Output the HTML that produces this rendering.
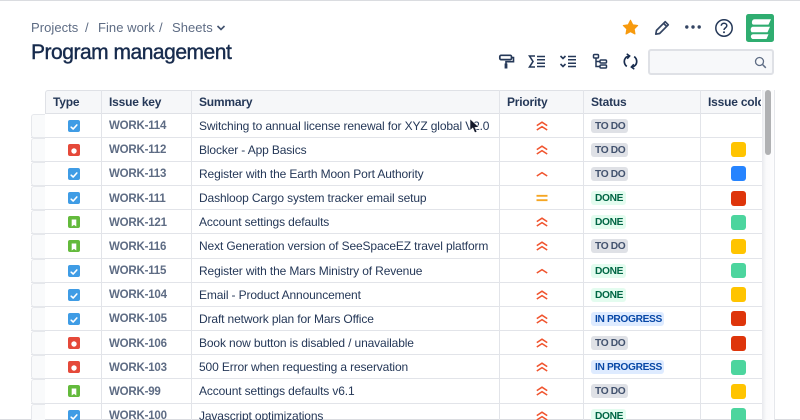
<!DOCTYPE html>
<html><head><meta charset="utf-8"><style>
html,body{margin:0;padding:0}
body{width:800px;height:420px;overflow:hidden;background:#fff;position:relative;font-family:"Liberation Sans",sans-serif;color:#172B4D}
#p{position:absolute;left:0;top:0;width:800px;height:420px;overflow:hidden}
.a{position:absolute;white-space:nowrap}
.crumb{top:20px;font-size:13px;line-height:16px;color:#5E6C84;letter-spacing:.05px}
h1{position:absolute;left:31px;top:39px;margin:0;font-size:21px;line-height:28px;font-weight:400;color:#172B4D;letter-spacing:-.48px;-webkit-text-stroke:.4px #172B4D;white-space:nowrap}
.hd{position:absolute;left:45px;top:90px;width:716px;height:24px;background:#F6F7F9;border:1px solid #DFE1E6;border-right:0;border-radius:3px 0 0 0;box-sizing:border-box}
.v{position:absolute;top:90px;width:1px;height:330px;background:#E2E4E9}
.th{position:absolute;top:95px;font-size:12px;line-height:14px;font-weight:700;color:#253858;letter-spacing:-.2px;white-space:nowrap}
.r{position:absolute;left:0;width:762px;height:24.17px}
.r .l{position:absolute;left:31px;right:0;bottom:0;height:1px;background:#E2E4E9}
.r .s{position:absolute;left:31px;top:0;width:14px;bottom:0;background:#F9FAFB;border:1px solid #E6E8EC;border-right:0;border-radius:3px 0 0 3px;box-sizing:border-box}
.i{position:absolute;left:67.5px;top:6px;width:12px;height:12px;border-radius:2px}
.task{background:#3F9CE5}.bug{background:#E5493A}.story{background:#63BA3C}
.k{position:absolute;left:109px;top:5.500px;font-size:11.500px;line-height:14px;font-weight:700;color:#5E6C84;letter-spacing:-.2px}
.t{position:absolute;left:199px;top:5px;font-size:12px;line-height:14px;color:#253858;letter-spacing:-.13px;white-space:nowrap}
.pr{position:absolute;left:536px;top:6px;width:12px;height:12px}
.z{position:absolute;left:591px;top:5px;height:14px;line-height:15px;font-size:10.200px;font-weight:700;padding:0 4px;border-radius:3px;letter-spacing:-.35px;white-space:nowrap}
.td{background:#DFE1E6;color:#42526E;width:29px;text-align:center}
.dn{background:#E3FCEF;color:#006644;width:27px;text-align:center}
.ip{background:#DEEBFF;color:#0747A6;width:65px;text-align:center}
.c{position:absolute;left:731px;top:4.500px;width:15px;height:15px;border-radius:3px}
</style></head><body><div id="p">
<svg width="0" height="0" style="position:absolute"><defs>
<symbol id="ck" viewBox="0 0 12 12"><path d="M3.200 6.200 5.200 8 8.800 4" fill="none" stroke="#fff" stroke-width="1.600" stroke-linecap="round" stroke-linejoin="round"/></symbol>
<symbol id="dot" viewBox="0 0 12 12"><circle cx="6" cy="6" r="2.700" fill="#fff"/></symbol>
<symbol id="bm" viewBox="0 0 12 12"><path d="M3.700 2.500h4.600v7L6 7.900 3.700 9.500z" fill="#fff"/></symbol>
<symbol id="hh" viewBox="0 0 12 12"><path d="M.8 5.600 6 2.200l5.200 3.400M.8 10 6 6.600l5.200 3.400" fill="none" stroke="#F0532D" stroke-width="1.500"/></symbol>
<symbol id="h1" viewBox="0 0 12 12"><path d="M.8 8 6 4.600 11.200 8" fill="none" stroke="#F0532D" stroke-width="1.500"/></symbol>
<symbol id="me" viewBox="0 0 12 12"><path d="M.5 3.800h11M.5 8.200h11" fill="none" stroke="#F5A623" stroke-width="1.900"/></symbol>
</defs></svg>

<div class="a" style="left:0;top:0;width:800px;height:1px;background:#DADCE0"></div>
<div class="a" style="left:0;top:419px;width:800px;height:1px;background:#DADCE0"></div>

<div class="a crumb" style="left:31px">Projects</div>
<div class="a crumb" style="left:85px">/</div>
<div class="a crumb" style="left:98px">Fine work</div>
<div class="a crumb" style="left:159px">/</div>
<div class="a crumb" style="left:172px">Sheets</div>
<svg class="a" style="left:216px;top:24px" width="10" height="8" viewBox="0 0 10 8"><path d="M1.500 2 5 5.500 8.500 2" fill="none" stroke="#42526E" stroke-width="1.600"/></svg>
<h1>Program management</h1>

<!-- top icons -->
<svg class="a" style="left:622px;top:19px" width="17" height="17" viewBox="0 0 17 17"><path d="M8.500 1.200 10.800 5.700l4.900.8-3.500 3.500.8 5-4.500-2.300L4 15l.8-5L1.300 6.500l4.900-.8z" fill="#F79A0E" stroke="#F79A0E" stroke-linejoin="round"/></svg>
<svg class="a" style="left:654px;top:20px" width="16" height="16" viewBox="0 0 16 16"><path d="M11.200 1.700 14.300 4.800 5.600 13.500 1.800 14.200 2.500 10.400zM9.600 3.400 12.600 6.400" fill="none" stroke="#344563" stroke-width="1.700" stroke-linejoin="round"/></svg>
<svg class="a" style="left:684px;top:24px" width="18" height="6" viewBox="0 0 18 6"><circle cx="2.800" cy="3" r="1.700" fill="#344563"/><circle cx="9" cy="3" r="1.700" fill="#344563"/><circle cx="15.200" cy="3" r="1.700" fill="#344563"/></svg>
<svg class="a" style="left:714px;top:18px" width="20" height="20" viewBox="0 0 20 20"><circle cx="10" cy="10" r="8.200" fill="none" stroke="#253858" stroke-width="1.500"/><path d="M7.300 7.800C7.300 6.200 8.500 5.300 10 5.300c1.600 0 2.800 1 2.800 2.400 0 2.200-2.800 2.200-2.800 4.300" fill="none" stroke="#253858" stroke-width="1.500"/><circle cx="10" cy="14.300" r="1" fill="#253858"/></svg>
<svg class="a" style="left:746px;top:14px" width="28" height="28" viewBox="0 0 28 28"><rect width="28" height="28" rx="2.500" fill="#2FAD70"/><path d="M8.500 5.300H25L22.500 10.600H7.500C5 10.600 5.500 5.300 8.500 5.300zM7 12.800H24L21.500 18.200H5.500C3.800 15.500 5 12.800 7 12.800zM7 20.200H22.500L20.500 25H6.500C4 24 4.500 20.200 7 20.200z" fill="#fff"/></svg>

<!-- toolbar icons -->
<svg class="a" style="left:498px;top:53px" width="17" height="17" viewBox="0 0 17 17"><rect x="1.800" y="2.300" width="11.700" height="4.300" rx="1.300" fill="none" stroke="#253858" stroke-width="1.700"/><path d="M13.500 4.500H15.500V8.700H8V11" fill="none" stroke="#253858" stroke-width="1.600"/><path d="M8 10.500V15.500" stroke="#253858" stroke-width="2.800"/></svg>
<svg class="a" style="left:528px;top:53px" width="18" height="17" viewBox="0 0 18 17"><path d="M7 3H1.500L5 8.500 1.500 14H7" fill="none" stroke="#253858" stroke-width="1.600"/><path d="M9 3.500H17M9 6.800H17M9 10.200H17M9 13.500H17" stroke="#253858" stroke-width="1.500"/></svg>
<svg class="a" style="left:559px;top:53px" width="18" height="17" viewBox="0 0 18 17"><path d="M1.500 3 4 5.500 6.500 3M1.500 11 4 13.500 6.500 11" fill="none" stroke="#253858" stroke-width="1.600"/><path d="M9 3.500H17M9 6.800H17M9 10.200H17M9 13.500H17" stroke="#253858" stroke-width="1.500"/></svg>
<svg class="a" style="left:592px;top:53px" width="17" height="17" viewBox="0 0 17 17"><rect x="1.500" y="1.500" width="5" height="3.500" rx="1" fill="none" stroke="#253858" stroke-width="1.500"/><rect x="8" y="7" width="6.500" height="3" rx="1" fill="none" stroke="#253858" stroke-width="1.500"/><rect x="8" y="12" width="6.500" height="3" rx="1" fill="none" stroke="#253858" stroke-width="1.500"/><path d="M4 5V13.500H8M4 8.500H8" fill="none" stroke="#253858" stroke-width="1.500"/></svg>
<svg class="a" style="left:622px;top:53px" width="17" height="17" viewBox="0 0 17 17"><path d="M6.500 3C3.800 4 2.300 6.200 2.300 8.500c0 2 .9 3.700 2.500 4.900M10.500 14c2.700-1 4.200-3.200 4.200-5.500 0-2-.9-3.700-2.500-4.900" fill="none" stroke="#172B4D" stroke-width="1.700"/><path d="M4.700 .8 7.700 3 5.200 5.800M12.300 16.200 9.300 14 11.800 11.200" fill="none" stroke="#172B4D" stroke-width="1.500"/></svg>

<!-- search -->
<div class="a" style="left:648px;top:49px;width:126px;height:26px;box-sizing:border-box;background:#F7F8FA;border:2px solid #DFE1E6;border-radius:3px"></div>
<svg class="a" style="left:754px;top:56px" width="13" height="13" viewBox="0 0 13 13"><circle cx="5.500" cy="5.500" r="4" fill="none" stroke="#5E6C84" stroke-width="1.300"/><path d="M8.500 8.500 11.800 11.800" stroke="#5E6C84" stroke-width="1.500"/></svg>

<!-- table -->
<div class="hd"></div>
<div class="th" style="left:53px">Type</div>
<div class="th" style="left:109px">Issue key</div>
<div class="th" style="left:199px">Summary</div>
<div class="th" style="left:507px">Priority</div>
<div class="th" style="left:591px">Status</div>
<div class="th" style="left:708px;width:53px;overflow:hidden">Issue color</div>

<div class="r" style="top:113.500px"><div class="l"></div><div class="s"></div><div class="i task"><svg width="12" height="12"><use href="#ck"/></svg></div><div class="k">WORK-114</div><div class="t">Switching to annual license renewal for XYZ global V2.0</div><svg class="pr"><use href="#hh"/></svg><div class="z td">TO DO</div></div>
<div class="r" style="top:137.670px"><div class="l"></div><div class="s"></div><div class="i bug"><svg width="12" height="12"><use href="#dot"/></svg></div><div class="k">WORK-112</div><div class="t">Blocker - App Basics</div><svg class="pr"><use href="#hh"/></svg><div class="z td">TO DO</div><div class="c" style="background:#FFC400"></div></div>
<div class="r" style="top:161.840px"><div class="l"></div><div class="s"></div><div class="i task"><svg width="12" height="12"><use href="#ck"/></svg></div><div class="k">WORK-113</div><div class="t">Register with the Earth Moon Port Authority</div><svg class="pr"><use href="#h1"/></svg><div class="z td">TO DO</div><div class="c" style="background:#2684FF"></div></div>
<div class="r" style="top:186.010px"><div class="l"></div><div class="s"></div><div class="i task"><svg width="12" height="12"><use href="#ck"/></svg></div><div class="k">WORK-111</div><div class="t">Dashloop Cargo system tracker email setup</div><svg class="pr"><use href="#me"/></svg><div class="z dn">DONE</div><div class="c" style="background:#DE350B"></div></div>
<div class="r" style="top:210.180px"><div class="l"></div><div class="s"></div><div class="i story"><svg width="12" height="12"><use href="#bm"/></svg></div><div class="k">WORK-121</div><div class="t">Account settings defaults</div><svg class="pr"><use href="#hh"/></svg><div class="z dn">DONE</div><div class="c" style="background:#4CD59E"></div></div>
<div class="r" style="top:234.350px"><div class="l"></div><div class="s"></div><div class="i story"><svg width="12" height="12"><use href="#bm"/></svg></div><div class="k">WORK-116</div><div class="t">Next Generation version of SeeSpaceEZ travel platform</div><svg class="pr"><use href="#hh"/></svg><div class="z td">TO DO</div><div class="c" style="background:#FFC400"></div></div>
<div class="r" style="top:258.520px"><div class="l"></div><div class="s"></div><div class="i task"><svg width="12" height="12"><use href="#ck"/></svg></div><div class="k">WORK-115</div><div class="t">Register with the Mars Ministry of Revenue</div><svg class="pr"><use href="#h1"/></svg><div class="z dn">DONE</div><div class="c" style="background:#4CD59E"></div></div>
<div class="r" style="top:282.690px"><div class="l"></div><div class="s"></div><div class="i task"><svg width="12" height="12"><use href="#ck"/></svg></div><div class="k">WORK-104</div><div class="t">Email - Product Announcement</div><svg class="pr"><use href="#hh"/></svg><div class="z dn">DONE</div><div class="c" style="background:#FFC400"></div></div>
<div class="r" style="top:306.860px"><div class="l"></div><div class="s"></div><div class="i task"><svg width="12" height="12"><use href="#ck"/></svg></div><div class="k">WORK-105</div><div class="t">Draft network plan for Mars Office</div><svg class="pr"><use href="#hh"/></svg><div class="z ip">IN PROGRESS</div><div class="c" style="background:#DE350B"></div></div>
<div class="r" style="top:331.030px"><div class="l"></div><div class="s"></div><div class="i bug"><svg width="12" height="12"><use href="#dot"/></svg></div><div class="k">WORK-106</div><div class="t">Book now button is disabled / unavailable</div><svg class="pr"><use href="#hh"/></svg><div class="z td">TO DO</div><div class="c" style="background:#DE350B"></div></div>
<div class="r" style="top:355.200px"><div class="l"></div><div class="s"></div><div class="i bug"><svg width="12" height="12"><use href="#dot"/></svg></div><div class="k">WORK-103</div><div class="t">500 Error when requesting a reservation</div><svg class="pr"><use href="#hh"/></svg><div class="z ip">IN PROGRESS</div><div class="c" style="background:#4CD59E"></div></div>
<div class="r" style="top:379.370px"><div class="l"></div><div class="s"></div><div class="i story"><svg width="12" height="12"><use href="#bm"/></svg></div><div class="k">WORK-99</div><div class="t">Account settings defaults v6.1</div><svg class="pr"><use href="#hh"/></svg><div class="z td">TO DO</div><div class="c" style="background:#FFC400"></div></div>
<div class="r" style="top:403.540px"><div class="l"></div><div class="s"></div><div class="i task"><svg width="12" height="12"><use href="#ck"/></svg></div><div class="k">WORK-100</div><div class="t">Javascript optimizations</div><svg class="pr"><use href="#hh"/></svg><div class="z dn">DONE</div><div class="c" style="background:#4CD59E"></div></div>

<div class="v" style="left:101px"></div>
<div class="v" style="left:191px"></div>
<div class="v" style="left:499px"></div>
<div class="v" style="left:583px"></div>
<div class="v" style="left:700px"></div>

<!-- scrollbar -->
<div class="a" style="left:762px;top:90px;width:12px;height:330px;background:linear-gradient(90deg,#E9EAEE,#FAFAFB 35%,#FDFDFE);border-right:1px solid #E6E8EC"></div>
<div class="a" style="left:765px;top:90px;width:6px;height:65px;background:#B0B1B3;border-radius:3px"></div>

<!-- cursor -->
<svg class="a" style="left:469px;top:118px" width="12" height="16" viewBox="0 0 12 16"><path d="M1 .8V12.500L3.800 10 5.800 14.800 8 13.800 6 9.300H10z" fill="#14192B" stroke="#fff" stroke-width=".6"/></svg>
</div></body></html>
